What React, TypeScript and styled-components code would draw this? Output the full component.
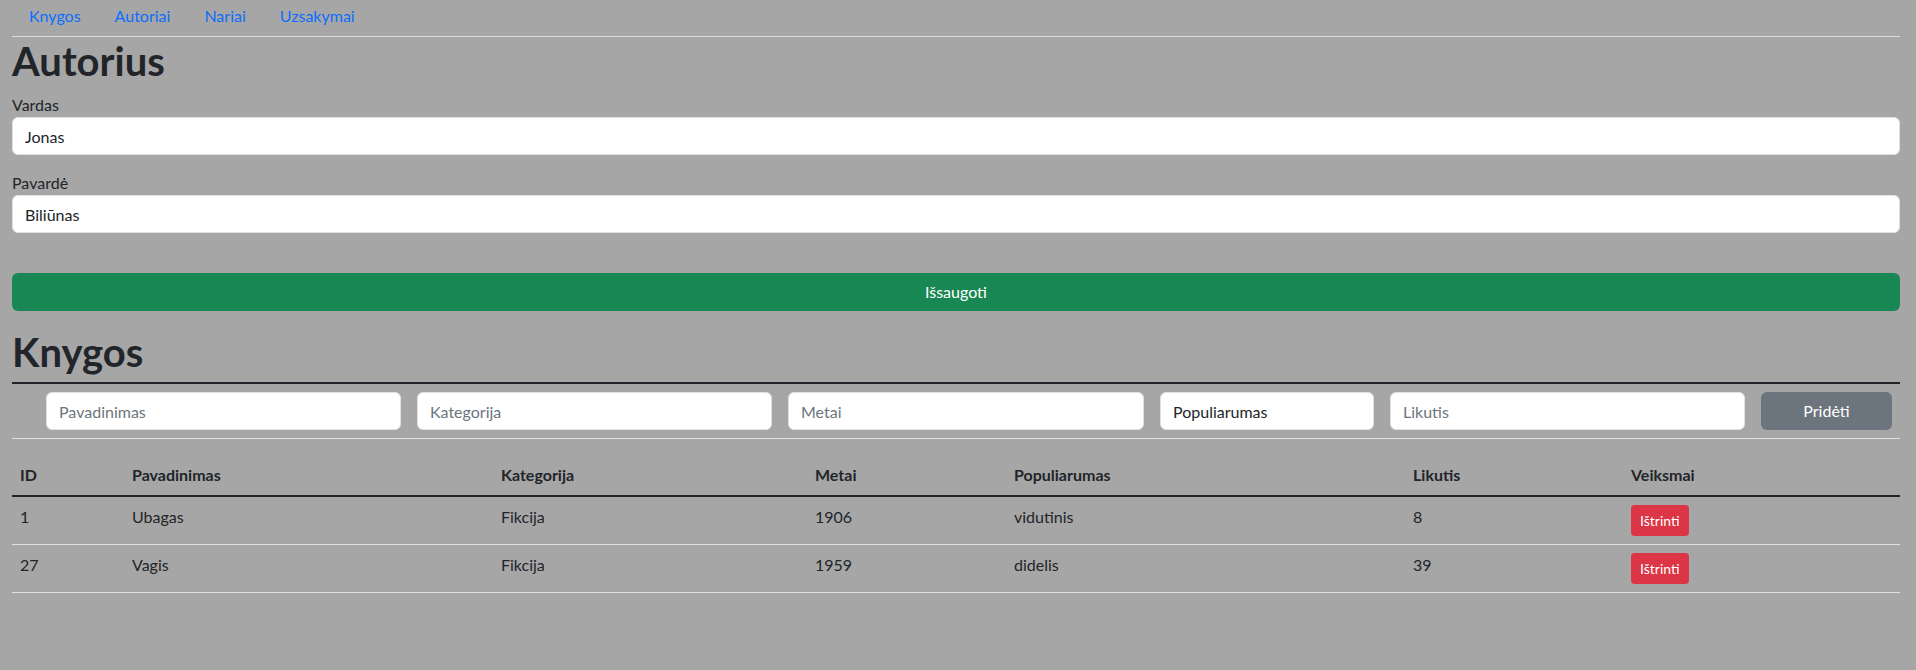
import React from "react";
import styled, { createGlobalStyle } from "styled-components";

const GlobalStyle = createGlobalStyle`
  * { box-sizing: border-box; }
  html, body {
    margin: 0;
    background: #a6a6a6;
  }
  body {
    font-family: Lato, "Segoe UI", "Noto Sans", sans-serif;
    font-size: 16px;
    line-height: 1.5;
    color: #212529;
  }
`;

const Page = styled.div`
  padding: 0 16px 0 12px;
`;

const NavList = styled.ul`
  display: flex;
  list-style: none;
  margin: 0;
  padding: 0;
`;

const NavLink = styled.a`
  display: block;
  padding: 4px 17px;
  line-height: 24px;
  color: #0d6efd;
  text-decoration: none;
  font-size: 16px;
`;

const Divider = styled.hr`
  margin: 4px 0 0;
  border: 0;
  border-top: 1px solid #dcdcdc;
`;

const Title = styled.h1<{ $mt?: number; $mb?: number }>`
  font-size: 40px;
  line-height: 48px;
  font-weight: 700;
  margin: ${(p) => p.$mt ?? 0}px 0 ${(p) => p.$mb ?? 8}px;
  color: #212529;
`;

const Field = styled.div`
  margin-bottom: 16px;
`;

const Label = styled.label`
  display: block;
  line-height: 24px;
  color: #212529;
`;

const TextInput = styled.input`
  display: block;
  width: 100%;
  height: 38px;
  padding: 6px 12px;
  font-family: inherit;
  font-size: 16px;
  line-height: 24px;
  color: #212529;
  background: #fff;
  border: 1px solid #dee2e6;
  border-radius: 6px;
  outline: none;
  &::placeholder {
    color: #6c757d;
  }
`;

const Button = styled.button<{ $variant: "success" | "secondary" | "danger"; $small?: boolean }>`
  display: block;
  font-family: inherit;
  color: #fff;
  border: 1px solid transparent;
  cursor: pointer;
  background: ${(p) =>
    p.$variant === "success" ? "#198754" : p.$variant === "danger" ? "#dc3545" : "#6c757d"};
  font-size: ${(p) => (p.$small ? 14 : 16)}px;
  line-height: ${(p) => (p.$small ? 21 : 24)}px;
  padding: ${(p) => (p.$small ? "4px 8px" : "6px 12px")};
  border-radius: ${(p) => (p.$small ? 4 : 6)}px;
  width: ${(p) => (p.$small ? "fit-content" : "100%")};
`;

const SaveButton = styled(Button)`
  margin-top: 40px;
`;

const AddRow = styled.div`
  display: grid;
  grid-template-columns: 26px 371px 371px 372px 230px 371px 1fr;
  border-top: 2px solid #212529;
  border-bottom: 1px solid #dee2e6;
  margin-bottom: 16px;
`;

const AddCell = styled.div`
  padding: 8px;
`;

const Table = styled.table`
  width: 100%;
  border-collapse: separate;
  border-spacing: 0;
  table-layout: fixed;
`;

const Col = styled.col<{ $w: number }>`
  width: ${(p) => p.$w}px;
`;

const Th = styled.th`
  text-align: left;
  font-weight: 700;
  padding: 8px;
  line-height: 24px;
  border-bottom: 2px solid #212529;
`;

const Td = styled.td`
  padding: 8px;
  line-height: 24px;
  vertical-align: top;
  border-bottom: 1px solid #dee2e6;
`;

const columns = [
  { label: "ID", w: 112 },
  { label: "Pavadinimas", w: 369 },
  { label: "Kategorija", w: 314 },
  { label: "Metai", w: 199 },
  { label: "Populiarumas", w: 399 },
  { label: "Likutis", w: 218 },
  { label: "Veiksmai", w: 277 },
];

const books = [
  { id: 1, title: "Ubagas", category: "Fikcija", year: 1906, pop: "vidutinis", left: 8 },
  { id: 27, title: "Vagis", category: "Fikcija", year: 1959, pop: "didelis", left: 39 },
];

export default function App() {
  return (
    <>
      <GlobalStyle />
      <Page>
        <nav>
          <NavList>
            {["Knygos", "Autoriai", "Nariai", "Uzsakymai"].map((l) => (
              <li key={l}>
                <NavLink href="#">{l}</NavLink>
              </li>
            ))}
          </NavList>
        </nav>
        <Divider />
        <Title>Autorius</Title>
        <Field>
          <Label>Vardas</Label>
          <TextInput defaultValue="Jonas" />
        </Field>
        <Field>
          <Label>Pavardė</Label>
          <TextInput defaultValue="Biliūnas" />
        </Field>
        <SaveButton $variant="success">Išsaugoti</SaveButton>
        <Title $mt={17} $mb={6}>
          Knygos
        </Title>
        <AddRow>
          <AddCell />
          <AddCell>
            <TextInput placeholder="Pavadinimas" />
          </AddCell>
          <AddCell>
            <TextInput placeholder="Kategorija" />
          </AddCell>
          <AddCell>
            <TextInput placeholder="Metai" />
          </AddCell>
          <AddCell>
            <TextInput defaultValue="Populiarumas" />
          </AddCell>
          <AddCell>
            <TextInput placeholder="Likutis" />
          </AddCell>
          <AddCell>
            <Button $variant="secondary">Pridėti</Button>
          </AddCell>
        </AddRow>
        <Table>
          <colgroup>
            {columns.map((c) => (
              <Col key={c.label} $w={c.w} />
            ))}
          </colgroup>
          <thead>
            <tr>
              {columns.map((c) => (
                <Th key={c.label}>{c.label}</Th>
              ))}
            </tr>
          </thead>
          <tbody>
            {books.map((b) => (
              <tr key={b.id}>
                <Td>{b.id}</Td>
                <Td>{b.title}</Td>
                <Td>{b.category}</Td>
                <Td>{b.year}</Td>
                <Td>{b.pop}</Td>
                <Td>{b.left}</Td>
                <Td>
                  <Button $variant="danger" $small>
                    Ištrinti
                  </Button>
                </Td>
              </tr>
            ))}
          </tbody>
        </Table>
      </Page>
    </>
  );
}
